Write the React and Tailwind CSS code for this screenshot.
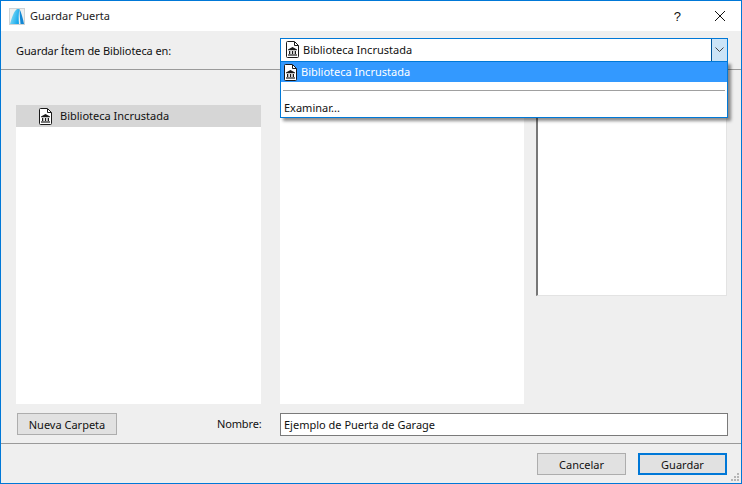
function LibIcon({ className = "" }) {
  return (
    <svg width="13" height="17" viewBox="0 0 13 17" className={className} fill="none">
      <path d="M0.5 1.5a1 1 0 0 1 1-1h7l4 4v11a1 1 0 0 1-1 1h-10a1 1 0 0 1-1-1z" fill="#fff" stroke="#1a1a1a" />
      <path d="M8.5 1v3.5h4" stroke="#1a1a1a" />
      <path d="M6.5 6l4.5 2.4v.8h-9v-.8z" fill="#1a1a1a" />
      <path d="M3 10h1.3v3H3zM5.9 10h1.3v3H5.9zM8.7 10H10v3H8.7z" fill="#1a1a1a" />
      <path d="M2 13.4h9v1.2H2z" fill="#1a1a1a" />
    </svg>
  );
}
export default function App() {
  return (
    <div className="w-[742px] h-[484px] flex flex-col bg-[#efefef] border border-[#0078d7] relative overflow-hidden text-[11px] leading-[13px] text-[#111] font-['Tahoma','Noto_Sans',sans-serif]">
      <div className="h-[30px] bg-white flex items-center shrink-0">
        <svg width="16" height="17" viewBox="0 0 16 17" className="ml-[8px]">
          <defs>
            <linearGradient id="lg" x1="0" y1="0" x2="1" y2="0.4">
              <stop offset="0" stopColor="#9ce9f7" />
              <stop offset="1" stopColor="#18a8ec" />
            </linearGradient>
          </defs>
          <rect x="0.5" y="0.5" width="15" height="16" fill="#eceff0" stroke="#cfd4d6" />
          <path d="M1 16C3 9 5 3 8 1h2.5C9.5 6 9.5 11 10 16z" fill="url(#lg)" />
          <path d="M10.5 1C12.5 5 14 11 15 16h-3.5C11 11 10.5 6 10.5 1z" fill="#1287d4" />
        </svg>
        <span className="ml-[5px] text-[#222] -mt-[1px]">Guardar Puerta</span>
        <span className="ml-auto mr-[33px] text-[13px] font-['Liberation_Sans',sans-serif]">?</span>
        <svg width="12" height="12" viewBox="0 0 12 12" className="mr-[8px]" stroke="#111" fill="none"><path d="M1 1l10 10M11 1L1 11" /></svg>
        <span className="w-[7px]" />
      </div>
      <div className="h-[39px] flex items-center border-b border-[#9a9a9a] shrink-0 relative">
        <span className="ml-[15px] w-[264px] tracking-[-0.1px]">Guardar Ítem de Biblioteca en:</span>
        <div className="w-[448px] h-[24px] -mt-[1px] bg-white border border-[#0078d7] flex items-center">
          <LibIcon className="ml-[5px]" />
          <span className="ml-[4px]">Biblioteca Incrustada</span>
          <div className="ml-auto w-[16px] h-full bg-[#cce4f7] border-l border-[#005499] flex items-center justify-center">
            <svg width="9" height="5" viewBox="0 0 9 5" fill="none" stroke="#444"><path d="M0.5 0.5l4 4 4-4" /></svg>
          </div>
        </div>
      </div>
      <div className="flex flex-1 pl-[15px] pr-[14px] gap-[19px] pt-[35px]">
        <div className="w-[245px] h-[299px] bg-white">
          <div className="h-[22px] bg-[#d6d6d6] flex items-center">
            <LibIcon className="ml-[23px]" />
            <span className="ml-[8px] -mt-[1px]">Biblioteca Incrustada</span>
          </div>
        </div>
        <div className="w-[245px] h-[299px] bg-white" />
        <div className="w-[191px] h-[191px] -ml-[7px] bg-white border-l-2 border-l-[#777] border-r border-b border-[#e3e3e3]" />
      </div>
      <div className="h-[39px] flex items-start pt-[8px] shrink-0 border-b border-[#9a9a9a] pl-[16px]">
        <button className="w-[100px] h-[22px] bg-[#e1e1e1] border border-[#adadad]">Nueva Carpeta</button>
        <span className="ml-[100px] w-[44px] leading-[22px] tracking-[-0.15px]">Nombre:</span>
        <div className="ml-[19px] w-[448px] h-[23px] bg-white border border-[#7a7a7a] flex items-center pl-[3px]">Ejemplo de Puerta de Garage</div>
      </div>
      <div className="h-[39px] shrink-0 flex items-start pt-[9px] justify-end pr-[14px] gap-[12px]">
        <button className="w-[89px] h-[22px] bg-[#e1e1e1] border border-[#adadad]">Cancelar</button>
        <button className="w-[89px] h-[22px] bg-[#e1e1e1] border-2 border-[#0078d7]">Guardar</button>
      </div>
      <svg width="9" height="9" viewBox="0 0 9 9" className="absolute right-[1px] bottom-[1px]" fill="#b5b5b5">
        <path d="M6 0h2v2H6zM3 3h2v2H3zM6 3h2v2H6zM0 6h2v2H0zM3 6h2v2H3zM6 6h2v2H6z" />
      </svg>
      <div className="absolute left-[279px] top-[60px] w-[448px] h-[57px] bg-white border border-[#0078d7] shadow-[3px_3px_3px_rgba(0,0,0,0.45)]">
        <div className="h-[20px] bg-[#3399ff] flex items-center text-white">
          <LibIcon className="ml-[3px]" />
          <span className="ml-[4px] -mt-[1px]">Biblioteca Incrustada</span>
        </div>
        <div className="h-px bg-[#a0a0a0] mt-[8px] mx-[2px]" />
        <div className="mt-[10px] ml-[3px]">Examinar...</div>
      </div>
    </div>
  );
}
